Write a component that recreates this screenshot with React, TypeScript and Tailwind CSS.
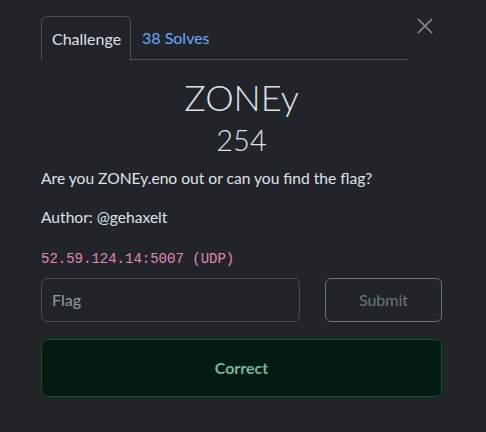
import React from "react";

export default function App() {
  return (
    <div className="w-[486px] h-[432px] bg-[#212529] text-[#dee2e6] relative overflow-hidden" style={{ fontFamily: "Lato, 'Open Sans', sans-serif" }}>
      <button className="absolute left-[416px] top-[17px] w-[18px] h-[18px] flex items-center justify-center text-[#8a8f94]">
        <svg width="18" height="18" viewBox="0 0 18 18" fill="none" stroke="currentColor" strokeWidth="1.6">
          <path d="M2 2L16 16M16 2L2 16" />
        </svg>
      </button>
      <div className="pl-[41px] pr-[44px] pt-[16px]">
        <div className="flex w-[367px] border-b border-[#495057] h-[44px]">
          <div className="h-[45px] px-[10px] flex items-center border border-[#495057] border-b-[#212529] rounded-t-[6px] text-[16px] text-[#dee2e6] bg-[#212529] w-[90px]">
            Challenge
          </div>
          <div className="px-[11px] flex items-center text-[16px] text-[#6ea8fe]">38 Solves</div>
        </div>
        <div className="text-center text-[36px] leading-[44px] mt-[15px] font-light text-[#dee2e6]">ZONEy</div>
        <div className="text-center text-[29px] leading-[36px] mt-[3px] font-light text-[#dee2e6]">254</div>
        <p className="text-[15.6px] leading-[24px] mt-[8px]">Are you ZONEy.eno out or can you find the flag?</p>
        <p className="text-[15.6px] leading-[24px] mt-[15px]">Author: @gehaxelt</p>
        <p className="text-[14px] leading-[20px] mt-[20px] text-[#e685b5]" style={{ fontFamily: "'Liberation Mono', monospace" }}>52.59.124.14:5007 (UDP)</p>
        <div className="flex mt-[9px] gap-[25px]">
          <div className="w-[259px] h-[44px] border border-[#495057] rounded-[6px] flex items-center px-[10px] text-[16px] text-[#959ba1]">Flag</div>
          <div className="w-[117px] h-[44px] border border-[#6c757d] rounded-[6px] flex items-center justify-center text-[16px] text-[#6c757d]">Submit</div>
        </div>
        <div className="mt-[17px] w-[401px] h-[58px] bg-[#051b11] border border-[#0f5132] rounded-[6px] flex items-center justify-center text-[16px] font-bold text-[#75b798]">
          Correct
        </div>
      </div>
    </div>
  );
}
